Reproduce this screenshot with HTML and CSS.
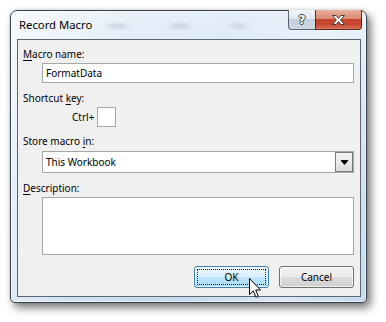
FILE: index.html
```html
<!DOCTYPE html>
<html lang="en">
<head>
    <meta charset="UTF-8">
    <title>Record Macro</title>
    <link rel="stylesheet" href="styles.css">
</head>
<body>
    <div class="desk">
        <div class="window">
            <div class="titlebar">
                <span class="title">Record Macro</span>
                <div class="caption-btns">
                    <span class="cap-btn help">?</span>
                    <span class="cap-btn close">
                        <svg width="13" height="10" viewBox="0 0 13 10">
                            <path d="M0.5 0.5h3.6L6.5 3.4L8.9 0.5h3.6L8.6 5l3.9 4.5H8.9L6.5 6.6L4.1 9.5H0.5L4.4 5Z" fill="#fff" stroke="#3e3e3e" stroke-width="1" stroke-linejoin="round"/>
                        </svg>
                    </span>
                </div>
            </div>

            <div class="client">
                <div class="label"><u>M</u>acro name:</div>
                <div class="field name-field">FormatData</div>

                <div class="label label-gap">Shortcut <u>k</u>ey:</div>
                <div class="shortcut">
                    <span>Ctrl+</span>
                    <span class="keybox"></span>
                </div>

                <div class="label label-gap-sm">Store macro <u>i</u>n:</div>
                <div class="field combo">
                    <span>This Workbook</span>
                    <span class="combo-btn">
                        <svg width="7" height="5" viewBox="0 0 7 5"><path d="M0 0h7v1L3.5 5L0 1Z" fill="#000"/></svg>
                    </span>
                </div>

                <div class="label label-gap">
                    <u>D</u>escription:</div>
                <div class="field desc"></div>

                <div class="actions">
                    <button class="btn btn-ok"><span class="focus-ring">OK</span></button>
                    <button class="btn">Cancel</button>
                </div>
            </div>
        </div>

        <!-- mouse pointer over the OK button -->
        <svg class="cursor" width="13" height="21" viewBox="0 0 13 21">
            <path d="M0.5 0.5V16.5L4.3 12.9L7 19.3L9.3 18.3L6.7 12H11.5Z" fill="#fff" stroke="#000" stroke-width="1" stroke-linejoin="miter"/>
        </svg>
    </div>
</body>
</html>
```

FILE: styles.css
```css
body {
    margin: 0;
    background: #fff;
    font-family: 'Noto Sans', 'Segoe UI', sans-serif;
    font-size: 10px;
    color: #000;
}

.desk {
    position: relative;
    width: 386px;
    height: 322px;
    overflow: hidden;
}

/* aero glass frame */
.window {
    box-sizing: border-box;
    width: 357px;
    height: 293px;
    margin: 10px 0 0 10px;
    padding: 0 5px 5px 6px;
    border: 1px solid #38424d;
    border-radius: 7px 7px 5px 5px;
    background:
        linear-gradient(100deg, rgba(255,255,255,0.7) 0%, rgba(255,255,255,0.15) 30%, rgba(255,255,255,0) 55%, rgba(255,255,255,0.35) 80%, rgba(255,255,255,0) 100%),
        linear-gradient(#e4eef8, #cfe0f2 40%, #c6daef);
    box-shadow: inset 0 0 0 1px rgba(255,255,255,0.55), 4px 5px 9px rgba(0,0,0,0.5), 0 0 4px rgba(0,0,0,0.15);
}

.titlebar {
    display: flex;
    justify-content: space-between;
    height: 28px;
    background:
        radial-gradient(ellipse 16px 5px at 100px 15px, rgba(110,120,135,0.22), rgba(110,120,135,0)),
        radial-gradient(ellipse 16px 5px at 163px 15px, rgba(110,120,135,0.22), rgba(110,120,135,0)),
        radial-gradient(ellipse 14px 5px at 222px 15px, rgba(110,120,135,0.18), rgba(110,120,135,0));
}

.title {
    padding-left: 2px;
    line-height: 28px;
    font-size: 11.3px;
    color: #000;
}

.caption-btns {
    display: flex;
    margin-top: -1px;
    margin-right: -1px;
    height: 20px;
}

.cap-btn {
    box-sizing: border-box;
    display: flex;
    align-items: center;
    justify-content: center;
    height: 20px;
    border: 1px solid rgba(45,55,70,0.75);
    border-top: none;
}

.help {
    width: 27px;
    border-right: none;
    border-radius: 0 0 0 4px;
    background: linear-gradient(#f1f5f9, #e1e9f1 45%, #c3d0dd 50%, #ccd8e4);
    font-family: 'DejaVu Sans', sans-serif;
    font-weight: bold;
    font-size: 12px;
    color: #fff;
    text-shadow: 1px 0 #404040, -1px 0 #404040, 0 1px #404040, 0 -1px #404040;
}

.close {
    width: 47px;
    border-radius: 0 0 4px 0;
    background: linear-gradient(#eab0a0, #d98a74 45%, #c4452c 50%, #c8472e 75%, #dc7459);
    border-color: rgba(70,25,15,0.85);
}

/* dialog body */
.client {
    box-sizing: border-box;
    height: 258px;
    padding: 0 6px 8px 5px;
    border: 1px solid #5a6673;
    background: #f0f0f0;
}

.label {
    margin-top: 7px;
    line-height: 15px;
}

.label-gap {
    margin-top: 8px;
}

.label-gap-sm {
    margin-top: 7px;
}

.label u {
    text-decoration-thickness: 1px;
    text-underline-offset: 2px;
}

.field {
    box-sizing: border-box;
    margin-left: 19px;
    border: 1px solid #a7a7a7;
    background: #fff;
}

.name-field {
    margin-top: 1px;
    height: 20px;
    padding-left: 3px;
    line-height: 18px;
}

.shortcut {
    display: flex;
    align-items: center;
    gap: 3px;
    margin-top: 1px;
    padding-left: 49px;
    height: 20px;
}

.keybox {
    box-sizing: border-box;
    width: 19px;
    height: 20px;
    border: 1px solid #a7a7a7;
    background: #fff;
}

.combo {
    display: flex;
    justify-content: space-between;
    align-items: center;
    margin-top: 2px;
    height: 22px;
    padding-left: 3px;
}

.combo-btn {
    box-sizing: border-box;
    display: flex;
    align-items: center;
    justify-content: center;
    width: 18px;
    height: 20px;
    border: 1px solid #7b7b7b;
    background: linear-gradient(#f6f6f6, #dcdcdc);
}

.desc {
    margin-top: 1px;
    height: 58px;
}

.actions {
    display: flex;
    justify-content: flex-end;
    gap: 10px;
    margin-top: 11px;
}

.btn {
    box-sizing: border-box;
    width: 75px;
    height: 22px;
    padding: 0;
    border: 1px solid #707070;
    border-radius: 3px;
    background: linear-gradient(#f2f2f2, #ebebeb 50%, #dddddd 50%, #cfcfcf);
    box-shadow: inset 0 0 0 1px rgba(255,255,255,0.7);
    font-family: 'Noto Sans', 'Segoe UI', sans-serif;
    font-size: 10px;
    color: #000;
}

.btn-ok {
    display: flex;
    padding: 2px;
    border-color: #3c7fb1;
    background: linear-gradient(#eaf6fd, #d9f0fc 50%, #bee6fd 50%, #a7d9f5);
}

.focus-ring {
    flex: 1;
    display: flex;
    align-items: center;
    justify-content: center;
    border: 1px dotted #222;
}

.cursor {
    position: absolute;
    left: 249px;
    top: 278px;
}
```
